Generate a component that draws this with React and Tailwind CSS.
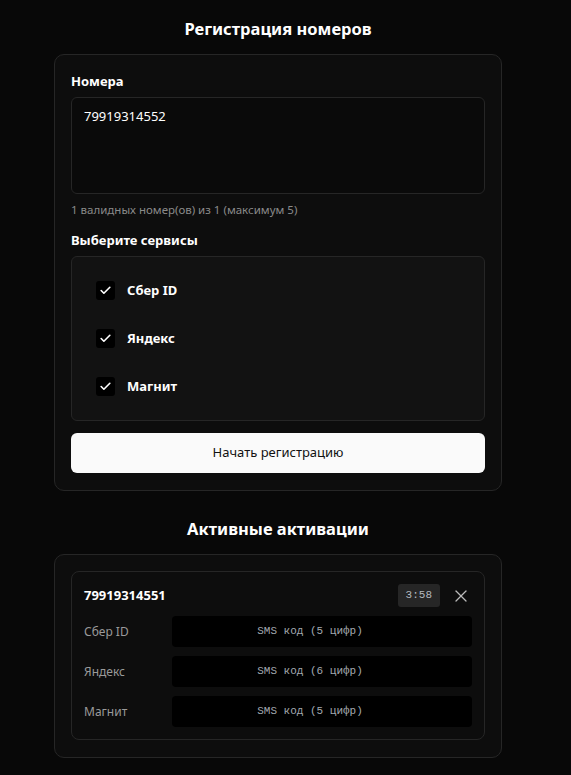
import { useState } from "react";
import { Check, X } from "lucide-react";

const services = ["Сбер ID", "Яндекс", "Магнит"];

const activations = [
    { name: "Сбер ID", hint: "SMS код (5 цифр)" },
    { name: "Яндекс", hint: "SMS код (6 цифр)" },
    { name: "Магнит", hint: "SMS код (5 цифр)" }
];

export default function App() {
    const [numbers, setNumbers] = useState("79919314552");
    const [checked, setChecked] = useState({
        "Сбер ID": true,
        "Яндекс": true,
        "Магнит": true
    });

    return (
        <div
            className="min-h-screen bg-[#080808] text-white"
            style={{ fontFamily: '"Noto Sans", "Open Sans", sans-serif' }}
        >
            <div className="w-[556px] pt-[17px] pb-4">
                <div className="mx-auto w-[448px]">
                    <h1 className="text-center text-[16.5px] font-bold leading-[24px]">
                        Регистрация номеров
                    </h1>
                    <div className="mt-[13px] rounded-[10px] border border-[#262626] bg-[#0d0d0d] px-4 pt-[17px] pb-[17px]">
                        <label className="block text-[13px] font-bold leading-[18px]">Номера</label>
                        <textarea
                            value={numbers}
                            onChange={(e) => setNumbers(e.target.value)}
                            className="mt-[7px] block h-[97px] w-full resize-none rounded-[6px] border border-[#262626] bg-[#0a0a0a] px-3 py-[9px] text-[13px] leading-[18px] text-white outline-none"
                        />
                        <p className="mt-[8px] text-[11.5px] leading-[16px] text-[#8a8a8a]">
                            1 валидных номер(ов) из 1 (максимум 5)
                        </p>
                        <p className="mt-[13px] text-[13px] font-bold leading-[18px]">Выберите сервисы</p>
                        <div className="mt-[7px] flex flex-col gap-[29px] rounded-[6px] border border-[#262626] bg-[#121212] px-6 py-[24px]">
                            {services.map((s) => (
                                <label key={s} className="flex h-[19px] items-center gap-[12px]">
                                    <button
                                        type="button"
                                        onClick={() => setChecked({ ...checked, [s]: !checked[s] })}
                                        className="flex h-[19px] w-[19px] items-center justify-center rounded-[3px] bg-black"
                                    >
                                        {checked[s] && <Check size={13} strokeWidth={3} />}
                                    </button>
                                    <span className="text-[13px] font-bold">{s}</span>
                                </label>
                            ))}
                        </div>
                        <button
                            type="button"
                            className="mt-[12px] h-[40px] w-full rounded-[6px] bg-[#fafafa] text-[13px] text-[#111]"
                        >
                            Начать регистрацию
                        </button>
                    </div>

                    <h2 className="mt-[26px] text-center text-[16.5px] font-bold leading-[24px]">
                        Активные активации
                    </h2>
                    <div className="mt-[13px] rounded-[10px] border border-[#262626] bg-[#0d0d0d] px-4 pt-4 pb-[17px]">
                        <div className="rounded-[8px] border border-[#262626] bg-[#0d0d0d] px-3 pt-3 pb-3">
                            <div className="flex items-center justify-between">
                                <span className="text-[13px] font-bold">79919314551</span>
                                <div className="flex items-center gap-[11px]">
                                    <span
                                        className="rounded-[3px] bg-[#262626] px-[8px] py-[3px] text-[11px] leading-[17px] text-[#b4b9bf]"
                                        style={{ fontFamily: '"Liberation Mono", monospace' }}
                                    >
                                        3:58
                                    </span>
                                    <X size={20} strokeWidth={1.5} className="mr-[1px] text-[#bbbbbb]" />
                                </div>
                            </div>
                            <div className="mt-[9px] flex flex-col gap-[9px]">
                                {activations.map((a) => (
                                    <div key={a.name} className="flex items-center">
                                        <span className="w-[88px] text-[12px] text-[#9a9a9a]">{a.name}</span>
                                        <div
                                            className="flex h-[31px] flex-1 items-center justify-center rounded-[4px] bg-black pr-6 text-[11px] text-[#a3a9b0]"
                                            style={{ fontFamily: '"Liberation Mono", monospace' }}
                                        >
                                            {a.hint}
                                        </div>
                                    </div>
                                ))}
                            </div>
                        </div>
                    </div>
                </div>
            </div>
        </div>
    );
}
